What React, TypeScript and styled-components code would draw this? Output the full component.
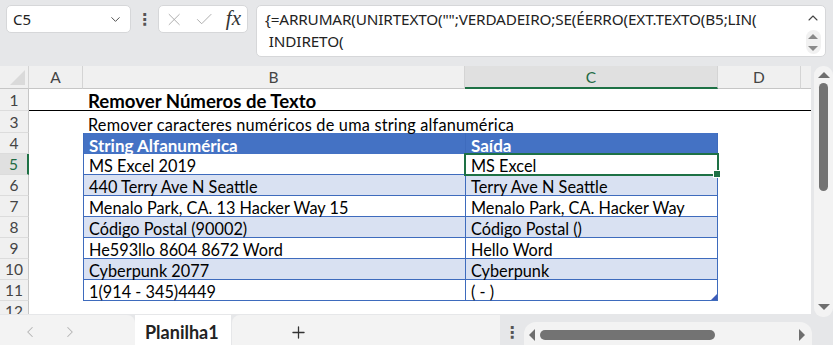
import styled, { createGlobalStyle, css } from 'styled-components';
import { ChevronDown, ChevronUp, ChevronLeft, ChevronRight, X, Check, Plus } from 'lucide-react';

const GlobalStyle = createGlobalStyle`
  html, body {
    margin: 0;
    padding: 0;
    background: #e6e7e9;
  }
  body {
    font-family: Lato, "Liberation Sans", sans-serif;
  }
`;

type Kind = 'blank' | 'title' | 'note' | 'head' | 'plain' | 'band';

interface RowSpec {
  num: string;
  height: number;
  kind?: 'title' | 'note' | 'table';
  b?: string;
  c?: string;
  band?: boolean;
  head?: boolean;
  active?: boolean;
  last?: boolean;
}

const rows: RowSpec[] = [
  { num: '1', height: 22, kind: 'title', b: 'Remover Números de Texto' },
  { num: '3', height: 22, kind: 'note', b: 'Remover caracteres numéricos de uma string alfanumérica' },
  { num: '4', height: 21, kind: 'table', head: true, b: 'String Alfanumérica', c: 'Saída' },
  { num: '5', height: 21, kind: 'table', b: 'MS Excel 2019', c: 'MS Excel', active: true },
  { num: '6', height: 21, kind: 'table', band: true, b: '440 Terry Ave N Seattle', c: 'Terry Ave N Seattle' },
  { num: '7', height: 21, kind: 'table', b: 'Menalo Park, CA. 13 Hacker Way 15', c: 'Menalo Park, CA. Hacker Way' },
  { num: '8', height: 21, kind: 'table', band: true, b: 'Código Postal (90002)', c: 'Código Postal ()' },
  { num: '9', height: 21, kind: 'table', b: 'He593llo 8604 8672 Word', c: 'Hello Word' },
  { num: '10', height: 21, kind: 'table', band: true, b: 'Cyberpunk 2077', c: 'Cyberpunk' },
  { num: '11', height: 21, kind: 'table', b: '1(914 - 345)4449', c: '( - )', last: true },
  { num: '12', height: 21 },
];

const App = () => {
  return (
    <Page>
      <GlobalStyle />
      <FormulaBar>
        <NameBox>
          <span>C5</span>
          <ChevronDown size={15} strokeWidth={1.5} color="#444" />
        </NameBox>
        <Kebab>⋮</Kebab>
        <FxBox>
          <X size={21} strokeWidth={1.1} color="#a8a8a8" />
          <Check size={21} strokeWidth={1.1} color="#a8a8a8" />
          <FxLabel>fx</FxLabel>
        </FxBox>
        <FormulaInput>
          <FormulaText>
            {'{=ARRUMAR(UNIRTEXTO("";VERDADEIRO;SE(ÉERRO(EXT.TEXTO(B5;LIN('}
            <br />
            {'\u00a0INDIRETO('}
          </FormulaText>
          <FormulaSide>
            <ChevronUp size={16} strokeWidth={1.6} color="#444" />
            <MiniSpinner>
              <Tri $dir="up" $size={5} $color="#8a8a8a" />
              <Tri $dir="down" $size={5} $color="#8a8a8a" />
            </MiniSpinner>
          </FormulaSide>
        </FormulaInput>
      </FormulaBar>

      <Body>
        <Sheet>
          <Line $h={23}>
            <Corner />
            <ColHead>A</ColHead>
            <ColHead>B</ColHead>
            <ColHead $active>C</ColHead>
            <ColHead>D</ColHead>
            <ColHead $filler />
          </Line>
          {rows.map((r) => {
            const tableKind: Kind = r.head ? 'head' : r.band ? 'band' : 'plain';
            const isTable = r.kind === 'table';
            const bKind: Kind = isTable ? tableKind : r.kind === 'title' ? 'title' : r.kind === 'note' ? 'note' : 'blank';
            return (
              <Line key={r.num} $h={r.height}>
                <RowHead $active={r.active}>{r.num}</RowHead>
                <Cell $kind="blank" $rule={r.kind === 'title'} />
                <Cell $kind={bKind} $rule={r.kind === 'title'} $table={isTable ? 'B' : undefined}>
                  {r.b}
                </Cell>
                <Cell
                  $kind={isTable ? tableKind : 'blank'}
                  $rule={r.kind === 'title'}
                  $table={isTable ? 'C' : undefined}
                  $selected={r.active}
                  $handle={r.last}
                >
                  {r.c}
                </Cell>
                <Cell $kind="blank" $rule={r.kind === 'title'} />
                <Cell $kind="blank" $rule={r.kind === 'title'} />
              </Line>
            );
          })}
        </Sheet>
        <VScroll>
          <Tri $dir="up" $size={6} $color="#6e6e6e" />
          <VThumb />
          <Spacer />
          <Tri $dir="down" $size={6} $color="#6e6e6e" />
        </VScroll>
      </Body>

      <TabBar>
        <NavBox>
          <ChevronLeft size={18} strokeWidth={1.4} color="#b4b4b4" />
          <ChevronRight size={18} strokeWidth={1.4} color="#b4b4b4" />
        </NavBox>
        <SheetTab>Planilha1</SheetTab>
        <AddBox>
          <Plus size={19} strokeWidth={1.6} color="#333" />
        </AddBox>
        <BottomKebab>⋮</BottomKebab>
        <HScroll>
          <Tri $dir="left" $size={6} $color="#6e6e6e" />
          <HThumb />
          <Spacer />
          <Tri $dir="right" $size={6} $color="#6e6e6e" />
        </HScroll>
      </TabBar>
    </Page>
  );
};

const Page = styled.div`
  display: flex;
  flex-direction: column;
  width: 833px;
  height: 345px;
  overflow: hidden;
  background: #e6e7e9;
`;

const FormulaBar = styled.div`
  display: flex;
  align-items: flex-start;
  height: 66px;
  padding: 5px 7px 0 6px;
  box-sizing: border-box;
`;

const boxBase = css`
  background: #ffffff;
  border: 1px solid #d6d7d9;
  border-radius: 5px;
  box-sizing: border-box;
`;

const NameBox = styled.div`
  ${boxBase}
  display: flex;
  align-items: center;
  justify-content: space-between;
  width: 125px;
  height: 28px;
  padding: 0 7px 0 6px;
  font-family: "Noto Sans", "Open Sans", sans-serif;
  font-size: 15px;
  color: #222;
`;

const Kebab = styled.div`
  width: 27px;
  height: 28px;
  display: flex;
  align-items: center;
  justify-content: center;
  font-family: "DejaVu Sans", sans-serif;
  font-size: 16px;
  font-weight: bold;
  color: #555;
`;

const FxBox = styled.div`
  ${boxBase}
  display: flex;
  align-items: center;
  gap: 10px;
  width: 90px;
  height: 28px;
  padding: 0 6px 0 5px;
`;

const FxLabel = styled.span`
  font-family: "Liberation Serif", serif;
  font-style: italic;
  font-size: 21px;
  color: #333;
  margin-left: 1px;
  margin-top: -2px;
`;

const FormulaInput = styled.div`
  ${boxBase}
  flex: 1;
  display: flex;
  height: 52px;
  margin-left: 8px;
  padding: 2px 3px 0 8px;
`;

const FormulaText = styled.div`
  flex: 1;
  font-family: "Noto Sans", "Open Sans", sans-serif;
  font-size: 15.3px;
  line-height: 22px;
  color: #222;
  letter-spacing: -0.15px;
  white-space: nowrap;
`;

const FormulaSide = styled.div`
  display: flex;
  flex-direction: column;
  align-items: center;
  width: 18px;
  padding-top: 2px;
`;

const MiniSpinner = styled.div`
  display: flex;
  flex-direction: column;
  align-items: center;
  justify-content: space-around;
  width: 15px;
  height: 24px;
  margin-top: 4px;
  border-radius: 8px;
  background: #f1f1f1;
`;

const Tri = styled.div<{ $dir: 'up' | 'down' | 'left' | 'right'; $size: number; $color: string }>`
  width: 0;
  height: 0;
  ${({ $dir, $size, $color }) =>
    $dir === 'up'
      ? `border-left: ${$size}px solid transparent; border-right: ${$size}px solid transparent; border-bottom: ${$size}px solid ${$color};`
      : $dir === 'down'
      ? `border-left: ${$size}px solid transparent; border-right: ${$size}px solid transparent; border-top: ${$size}px solid ${$color};`
      : $dir === 'left'
      ? `border-top: ${$size}px solid transparent; border-bottom: ${$size}px solid transparent; border-right: ${$size}px solid ${$color};`
      : `border-top: ${$size}px solid transparent; border-bottom: ${$size}px solid transparent; border-left: ${$size}px solid ${$color};`}
`;

const Body = styled.div`
  display: flex;
  height: 248px;
`;

const Sheet = styled.div`
  width: 811px;
  height: 248px;
  overflow: hidden;
  background: #ffffff;
`;

const Line = styled.div<{ $h: number }>`
  display: grid;
  grid-template-columns: 29px 54px 382px 253px 83px 1fr;
  height: ${({ $h }) => $h}px;
  background: #ffffff;
`;

const Corner = styled.div`
  position: relative;
  background: #f0f0f0;
  border-right: 1px solid #d4d4d4;
  border-bottom: 1px solid #c6c6c6;

  &::after {
    content: '';
    position: absolute;
    right: 3px;
    bottom: 3px;
    width: 0;
    height: 0;
    border-left: 15px solid transparent;
    border-bottom: 15px solid #dadada;
  }
`;

const ColHead = styled.div<{ $active?: boolean; $filler?: boolean }>`
  display: flex;
  align-items: center;
  justify-content: center;
  box-sizing: border-box;
  background: ${({ $active }) => ($active ? '#e0e0e0' : '#f0f0f0')};
  border-right: ${({ $filler }) => ($filler ? 'none' : '1px solid #d4d4d4')};
  border-bottom: ${({ $active }) => ($active ? '2px solid #1e7145' : '1px solid #c6c6c6')};
  font-family: Lato, "Liberation Sans", sans-serif;
  font-size: 15.5px;
  color: ${({ $active }) => ($active ? '#1e6b44' : '#444')};
  padding-top: ${({ $active }) => ($active ? '1px' : '0')};
`;

const RowHead = styled.div<{ $active?: boolean }>`
  display: flex;
  align-items: center;
  justify-content: center;
  box-sizing: border-box;
  background: ${({ $active }) => ($active ? '#e0e0e0' : '#f0f0f0')};
  border-right: ${({ $active }) => ($active ? '2px solid #1e7145' : '1px solid #c6c6c6')};
  border-bottom: 1px solid #dcdcdc;
  font-family: Lato, "Liberation Sans", sans-serif;
  font-size: 15.5px;
  color: ${({ $active }) => ($active ? '#1e6b44' : '#444')};
`;

const Cell = styled.div<{
  $kind: Kind;
  $rule?: boolean;
  $table?: 'B' | 'C';
  $selected?: boolean;
  $handle?: boolean;
}>`
  position: relative;
  display: flex;
  align-items: flex-end;
  box-sizing: border-box;
  padding: 0 0 0 5px;
  white-space: nowrap;
  overflow: visible;
  font-family: Lato, "Liberation Sans", sans-serif;
  font-size: 16.3px;
  line-height: 17px;
  color: #000;
  background: ${({ $kind }) =>
    $kind === 'head' ? '#4472c4' : $kind === 'band' ? '#d9e1f2' : $kind === 'plain' ? '#ffffff' : 'transparent'};
  ${({ $kind }) => $kind === 'head' && 'color: #ffffff; font-weight: 700; font-size: 17px;'}
  ${({ $kind }) => $kind === 'title' && 'font-weight: 700; font-size: 18.6px; z-index: 1;'}
  ${({ $kind }) => $kind === 'note' && 'z-index: 1; letter-spacing: 0.2px;'}
  ${({ $rule }) => $rule && 'border-bottom: 1px solid #000;'}
  ${({ $table, $kind }) =>
    $table &&
    css`
      border-left: 1px solid #3e6bbd;
      ${$kind !== 'head' && 'border-bottom: 1px solid #3e6bbd;'}
    `}
  ${({ $table }) => $table === 'C' && 'border-right: 1px solid #3e6bbd;'}
  ${({ $selected }) =>
    $selected &&
    css`
      outline: 2px solid #1e7145;
      outline-offset: -1px;
      z-index: 2;
      &::after {
        content: '';
        position: absolute;
        right: -4px;
        bottom: -4px;
        width: 6px;
        height: 6px;
        background: #1e7145;
        border: 1px solid #fff;
      }
    `}
  ${({ $handle }) =>
    $handle &&
    css`
      &::after {
        content: '';
        position: absolute;
        right: 0;
        bottom: 0;
        width: 6px;
        height: 6px;
        background: #3e5cb8;
        clip-path: polygon(100% 0, 100% 100%, 0 100%);
      }
    `}
`;

const VScroll = styled.div`
  display: flex;
  flex-direction: column;
  align-items: center;
  width: 19px;
  height: 251px;
  margin-left: 3px;
  padding: 6px 0 7px;
  box-sizing: border-box;
  background: #f3f3f3;
  border-radius: 9px;
`;

const VThumb = styled.div`
  width: 9px;
  height: 108px;
  margin-top: 5px;
  border-radius: 5px;
  background: #737373;
`;

const Spacer = styled.div`
  flex: 1;
`;

const TabBar = styled.div`
  display: flex;
  align-items: stretch;
  height: 31px;
  padding-top: 1px;
  box-sizing: border-box;
`;

const NavBox = styled.div`
  display: flex;
  align-items: center;
  gap: 22px;
  width: 135px;
  padding: 4px 0 0 21px;
  box-sizing: border-box;
  background: #f3f3f3;
  border-top-right-radius: 8px;
`;

const SheetTab = styled.div`
  display: flex;
  align-items: center;
  width: 96px;
  padding: 4px 0 0 10px;
  box-sizing: border-box;
  background: #ffffff;
  font-family: Lato, "Liberation Sans", sans-serif;
  font-weight: 700;
  font-size: 18px;
  color: #222;
`;

const AddBox = styled.div`
  display: flex;
  align-items: center;
  width: 268px;
  margin-left: 1px;
  padding: 4px 0 0 57px;
  box-sizing: border-box;
  background: #f3f3f3;
  border-top-left-radius: 8px;
`;

const BottomKebab = styled.div`
  display: flex;
  align-items: center;
  justify-content: center;
  width: 24px;
  padding-top: 4px;
  font-family: "DejaVu Sans", sans-serif;
  font-size: 16px;
  font-weight: bold;
  color: #555;
`;

const HScroll = styled.div`
  display: flex;
  align-items: center;
  width: 288px;
  margin-top: 7px;
  padding: 3px 7px 0 5px;
  box-sizing: border-box;
  background: #f3f3f3;
  border-radius: 12px 12px 0 0;
`;

const HThumb = styled.div`
  width: 175px;
  height: 10px;
  margin-left: 5px;
  border-radius: 5px;
  background: #737373;
`;

export default App;
